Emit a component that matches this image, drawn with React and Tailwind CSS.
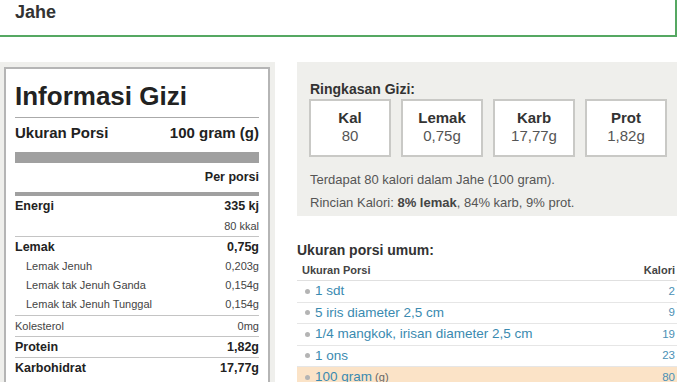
import React from "react";

const NutRow = ({ label, value, bold = false, sub = false, h = "h-[20px]", extra = "" }) => (
  <div className={`flex items-center justify-between ${h} ${extra}`}>
    <span
      className={
        bold
          ? "text-[12.5px] font-bold text-[#222]"
          : sub
          ? "pl-[11px] text-[11px] text-[#444]"
          : "text-[11px] text-[#444]"
      }
    >
      {label}
    </span>
    <span className={bold ? "text-[12.5px] font-bold text-[#222]" : "text-[11px] text-[#444]"}>{value}</span>
  </div>
);

const SummaryBox = ({ label, value }) => (
  <div className="w-[82px] h-[58px] border-2 border-[#c9c9c6] bg-white flex flex-col items-center pt-[8px] text-[15px] leading-[17.5px]">
    <span className="font-bold text-[#333]">{label}</span>
    <span className="text-[#555]">{value}</span>
  </div>
);

const portions = [
  { name: "1 sdt", kal: "2" },
  { name: "5 iris diameter 2,5 cm", kal: "9" },
  { name: "1/4 mangkok, irisan diameter 2,5 cm", kal: "19" },
  { name: "1 ons", kal: "23" },
  { name: "100 gram", unit: "(g)", kal: "80", active: true },
];

export default function App() {
  return (
    <div className="w-[680px] h-[382px] overflow-hidden bg-white text-[#333] font-['Liberation_Sans',Arial,sans-serif]">
      <div className="w-[677px] h-[37px] border-b-2 border-r-2 border-[#55a862] pl-[15px] pt-[1px] text-[18px] leading-[22px] font-bold text-[#333]">
        Jahe
      </div>

      <div className="flex mt-[25px]">
        {/* left: nutrition facts */}
        <div className="w-[275px] bg-[#efefec] pt-[5px] pl-[4px] pr-[5px]">
          <div className="border-2 border-[#b5b5b5] bg-white px-[9px]">
            <div className="pt-[12px] pb-[6px] border-b border-[#aaa] text-[26px] leading-[30px] font-bold text-[#222]">
              Informasi Gizi
            </div>
            <div className="flex justify-between pt-[5px] text-[15px] leading-[20px] font-bold text-[#222]">
              <span>Ukuran Porsi</span>
              <span>100 gram (g)</span>
            </div>
            <div className="mt-[9px] h-[11px] bg-[#a0a0a0]" />
            <div className="pt-[5px] pb-[6px] text-right text-[12.5px] leading-[18px] font-bold text-[#222]">Per porsi</div>
            <div className="h-[4px] bg-[#a0a0a0]" />
            <NutRow label="Energi" value="335 kj" bold />
            <NutRow label="" value="80 kkal" />
            <div className="border-t border-[#c4c4c4]" />
            <NutRow label="Lemak" value="0,75g" bold />
            <NutRow label="Lemak Jenuh" value="0,203g" sub h="h-[19px]" />
            <NutRow label="Lemak tak Jenuh Ganda" value="0,154g" sub h="h-[19px]" />
            <NutRow label="Lemak tak Jenuh Tunggal" value="0,154g" sub h="h-[19px]" extra="mb-[1px]" />
            <div className="border-t border-[#c4c4c4]" />
            <NutRow label="Kolesterol" value="0mg" />
            <div className="border-t border-[#c4c4c4]" />
            <NutRow label="Protein" value="1,82g" bold />
            <div className="border-t border-[#c4c4c4]" />
            <NutRow label="Karbohidrat" value="17,77g" bold />
            <div className="h-[20px]" />
          </div>
        </div>

        {/* right: summary + portions */}
        <div className="ml-[22px] w-[380px]">
          <div className="bg-[#efefec] pl-[12px] pt-[18px] pb-[2px]">
            <div className="pl-[1px] text-[14px] leading-[18px] font-bold text-[#333]">Ringkasan Gizi:</div>
            <div className="flex gap-[10px] mt-[1px]">
              <SummaryBox label="Kal" value="80" />
              <SummaryBox label="Lemak" value="0,75g" />
              <SummaryBox label="Karb" value="17,77g" />
              <SummaryBox label="Prot" value="1,82g" />
            </div>
            <div className="mt-[11px] pl-[1px] text-[13px] leading-[23px] text-[#555]">
              <p>Terdapat 80 kalori dalam Jahe (100 gram).</p>
              <p>
                Rincian Kalori: <span className="font-bold text-[#444]">8% lemak</span>, 84% karb, 9% prot.
              </p>
            </div>
          </div>

          <div className="mt-[25px] text-[14px] leading-[18px] font-bold text-[#333]">Ukuran porsi umum:</div>
          <div className="mt-[1px] flex items-center justify-between h-[21px] border-b border-[#e0e0e0] pl-[5px] pr-[2px] text-[11px] font-bold text-[#444]">
            <span>Ukuran Porsi</span>
            <span>Kalori</span>
          </div>
          {portions.map((p) => (
            <div
              key={p.name}
              className={`flex items-center justify-between h-[21.5px] border-b border-[#e6e6e6] pl-[8px] pr-[2px] ${
                p.active ? "bg-[#fbe3c7]" : ""
              }`}
            >
              <div className="flex items-center">
                <span className="w-[5px] h-[5px] rounded-full bg-[#b4b4b4] mr-[5px]" />
                <span className="text-[13.5px] text-[#3a8ab0]">
                  {p.name}
                  {p.unit && <span className="text-[11px] text-[#666]"> {p.unit}</span>}
                </span>
              </div>
              <span className="text-[11.5px] text-[#4a90b5]">{p.kal}</span>
            </div>
          ))}
        </div>
      </div>
    </div>
  );
}
